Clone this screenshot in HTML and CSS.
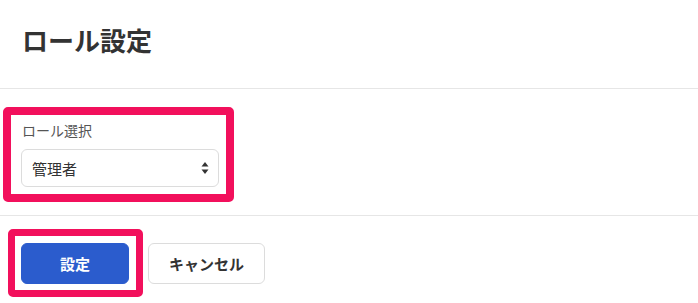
FILE: index.html
```html
<!DOCTYPE html>
<html lang="ja">
<head>
<meta charset="utf-8">
<link rel="stylesheet" href="styles.css">
</head>
<body>
<div class="page">
  <header class="header">
    <h1 class="title">ロール設定</h1>
  </header>
  <section class="body">
    <div class="highlight hl-form">
      <div class="form-group">
        <label class="label">ロール選択</label>
        <div class="select">
          <span class="select-value">管理者</span>
          <svg class="select-arrow" width="8" height="14" viewBox="0 0 8 14">
            <path d="M4 1 L7.5 5.5 L0.5 5.5 Z" fill="#333"/>
            <path d="M4 13 L7.5 8.5 L0.5 8.5 Z" fill="#333"/>
          </svg>
        </div>
      </div>
    </div>
  </section>
  <footer class="footer">
    <div class="highlight hl-btn">
      <button class="btn btn-primary">設定</button>
    </div>
    <button class="btn btn-default">キャンセル</button>
  </footer>
</div>
</body>
</html>
```
FILE: styles.css
```css
html, body {
  margin: 0;
  padding: 0;
  background: #fff;
}
body {
  font-family: "Noto Sans CJK JP", "Noto Sans", sans-serif;
  color: #333;
}
.page {
  width: 698px;
}
.header {
  height: 89px;
  box-sizing: border-box;
  padding: 21px 22px 0;
  border-bottom: 1px solid #e6e6e6;
}
.title {
  margin: 0;
  font-size: 26px;
  line-height: 38px;
  font-weight: 700;
  color: #333;
}
.body {
  height: 127px;
  box-sizing: border-box;
  padding: 18px 0 0 3px;
  border-bottom: 1px solid #e6e6e6;
}
.highlight {
  border-style: solid;
  border-color: #f2105c;
  border-radius: 5px;
  box-sizing: border-box;
}
.hl-form {
  width: 231px;
  height: 95px;
  border-width: 8px;
  padding: 5px 7px 0 10px;
}
.form-group {
  display: flex;
  flex-direction: column;
}
.label {
  font-size: 14px;
  line-height: 20px;
  color: #555;
  margin-bottom: 9px;
  padding-left: 1px;
}
.select {
  height: 38px;
  box-sizing: border-box;
  border: 1px solid #dcdcdc;
  border-radius: 6px;
  background: #fff;
  display: flex;
  align-items: center;
  justify-content: space-between;
  padding: 0 9px 0 10px;
}
.select-value {
  font-size: 15px;
  color: #333;
}
.select-arrow {
  display: block;
}
.footer {
  display: flex;
  align-items: center;
  gap: 5px;
  padding: 13px 0 0 8px;
}
.hl-btn {
  width: 135px;
  height: 68px;
  border-width: 7px;
  padding: 7px 6px 6px 6px;
}
.btn {
  font-family: "Noto Sans CJK JP", "Noto Sans", sans-serif;
  font-size: 15px;
  font-weight: 700;
  height: 41px;
  box-sizing: border-box;
  border-radius: 6px;
  cursor: pointer;
  padding: 0;
  margin: 0;
}
.btn-primary {
  width: 108px;
  background: #2b5ccd;
  border: 1px solid #2b5ccd;
  color: #fff;
}
.btn-default {
  width: 117px;
  background: #fff;
  border: 1px solid #dcdcdc;
  color: #333;
}
```
